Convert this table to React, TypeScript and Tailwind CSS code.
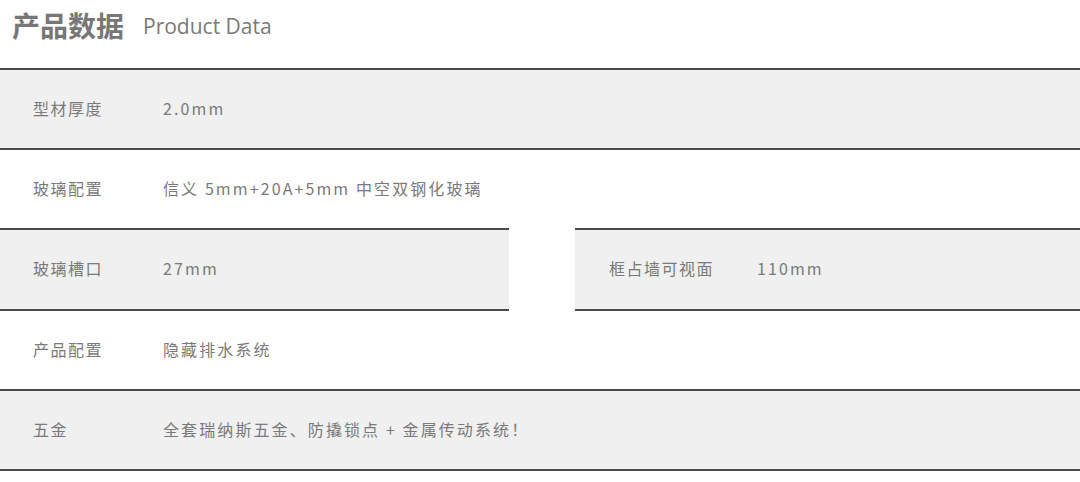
import React from "react";

const font = { fontFamily: '"Noto Sans CJK SC", "Open Sans", sans-serif' };

function Cell({ label, value, labelW = "w-[130px]" }: { label: string; value: string; labelW?: string }) {
  return (
    <div className="-mt-[3px] flex items-center text-[16px] text-[#7a7a7a]">
      <span className={`${labelW} tracking-[1.5px]`}>{label}</span>
      <span className="tracking-[2.1px]">{value}</span>
    </div>
  );
}

export default function App() {
  return (
    <div className="h-[482px] w-[1080px] bg-white" style={font}>
      <div className="flex h-[68px] items-start gap-[19px] pl-[12px] pt-[4px]">
        <h1 className="text-[28px] font-bold text-[#777]">产品数据</h1>
        <span className="mt-[7px] text-[21px] text-[#7a7a7a]" style={{ fontFamily: '"Open Sans", sans-serif' }}>
          Product Data
        </span>
      </div>

      <div className="flex h-[80px] items-center border-t-2 border-[#4a4a4a] bg-[#eff0ef] pl-[33px]">
        <Cell label="型材厚度" value="2.0mm" />
      </div>

      <div className="flex h-[80px] items-center border-t-2 border-[#4a4a4a] bg-white pl-[33px]">
        <Cell label="玻璃配置" value="信义 5mm+20A+5mm 中空双钢化玻璃" />
      </div>

      <div className="flex h-[83px] justify-between">
        <div className="flex w-[509px] items-center border-y-2 border-[#4a4a4a] bg-[#eff0ef] pl-[33px]">
          <Cell label="玻璃槽口" value="27mm" />
        </div>
        <div className="flex w-[505px] items-center border-y-2 border-[#4a4a4a] bg-[#eff0ef] pl-[34px]">
          <Cell label="框占墙可视面" value="110mm" labelW="w-[148px]" />
        </div>
      </div>

      <div className="flex h-[78px] items-center bg-white pl-[33px]">
        <Cell label="产品配置" value="隐藏排水系统" />
      </div>

      <div className="flex h-[82px] items-center border-y-2 border-[#4a4a4a] bg-[#eff0ef] pl-[33px]">
        <Cell label="五金" value="全套瑞纳斯五金、防撬锁点 + 金属传动系统！" />
      </div>
    </div>
  );
}
